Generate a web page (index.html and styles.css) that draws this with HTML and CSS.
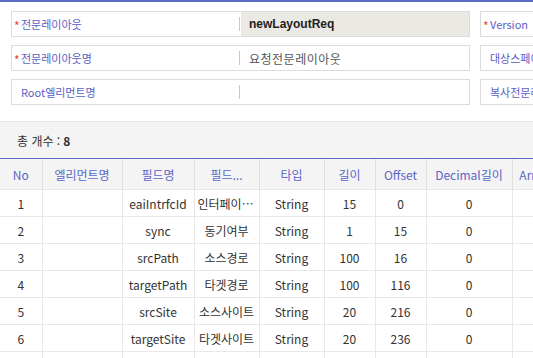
FILE: index.html
```html
<!DOCTYPE html>
<html lang="ko">
<head>
  <meta charset="UTF-8">
  <title>전문레이아웃</title>
  <link rel="stylesheet" href="styles.css">
</head>
<body>

  <div class="form-area">
    <div class="form-grid">
      <div class="field">
        <label class="field-label required">전문레이아웃</label>
        <div class="field-input readonly bold">newLayoutReq</div>
      </div>
      <div class="field">
        <label class="field-label required">Version</label>
        <div class="field-input"></div>
      </div>
      <div class="field">
        <label class="field-label required">전문레이아웃명</label>
        <div class="field-input">요청전문레이아웃</div>
      </div>
      <div class="field">
        <label class="field-label">대상스페이스</label>
        <div class="field-input"></div>
      </div>
      <div class="field">
        <label class="field-label">Root엘리먼트명</label>
        <div class="field-input"></div>
      </div>
      <div class="field">
        <label class="field-label">복사전문레이아웃</label>
        <div class="field-input"></div>
      </div>
    </div>
  </div>

  <div class="count-bar">총 개수 : <b>8</b></div>

  <table class="grid">
    <colgroup>
      <col style="width:42px">
      <col style="width:80px">
      <col style="width:72px">
      <col style="width:65px">
      <col style="width:65px">
      <col style="width:51px">
      <col style="width:51px">
      <col style="width:86px">
      <col style="width:44px">
    </colgroup>
    <thead>
      <tr>
        <th>No</th>
        <th>엘리먼트명</th>
        <th>필드명</th>
        <th>필드...</th>
        <th>타입</th>
        <th>길이</th>
        <th>Offset</th>
        <th>Decimal길이</th>
        <th>Array</th>
      </tr>
    </thead>
    <tbody>
      <tr><td>1</td><td></td><td>eaiIntrfcId</td><td class="clip">인터페이스ID</td><td>String</td><td>15</td><td>0</td><td>0</td><td></td></tr>
      <tr><td>2</td><td></td><td>sync</td><td>동기여부</td><td>String</td><td>1</td><td>15</td><td>0</td><td></td></tr>
      <tr><td>3</td><td></td><td>srcPath</td><td>소스경로</td><td>String</td><td>100</td><td>16</td><td>0</td><td></td></tr>
      <tr><td>4</td><td></td><td>targetPath</td><td>타겟경로</td><td>String</td><td>100</td><td>116</td><td>0</td><td></td></tr>
      <tr><td>5</td><td></td><td>srcSite</td><td>소스사이트</td><td>String</td><td>20</td><td>216</td><td>0</td><td></td></tr>
      <tr><td>6</td><td></td><td>targetSite</td><td>타겟사이트</td><td>String</td><td>20</td><td>236</td><td>0</td><td></td></tr>
      <tr><td>7</td><td></td><td>srcFile</td><td>소스파일</td><td>String</td><td>100</td><td>256</td><td>0</td><td></td></tr>
      <tr><td>8</td><td></td><td>targetFile</td><td>타겟파일</td><td>String</td><td>100</td><td>356</td><td>0</td><td></td></tr>
    </tbody>
  </table>

</body>
</html>
```

FILE: styles.css
```css
body {
  font-family: "Noto Sans CJK KR", "Noto Sans", sans-serif;
  font-size: 12px;
  color: #333;
  margin: 0;
  overflow: hidden;
  background-color: #fff;
}

.form-area {
  border-top: 2px solid #5b6cc8;
  padding: 9px 0 16px 11px;
  border-bottom: 1px solid #e6e6e6;
}

.form-grid {
  display: grid;
  grid-template-columns: 459px 459px;
  column-gap: 10px;
  row-gap: 8px;
}

.field {
  display: flex;
  height: 26px;
  border: 1px solid #dcdcdc;
  box-sizing: border-box;
  background-color: #fff;
}

.field-label {
  width: 228px;
  flex: none;
  display: flex;
  align-items: center;
  padding-left: 9px;
  box-sizing: border-box;
  color: #5a5ec4;
  font-size: 11px;
  position: relative;
}

.field-label::after {
  content: "";
  position: absolute;
  right: 0;
  top: 5px;
  height: 14px;
  width: 1px;
  background-color: #c8c8c8;
}

.required::before {
  content: "*";
  color: #e8452c;
  position: absolute;
  left: 2px;
  top: 5px;
  font-size: 12px;
}

.field-input {
  flex: 1;
  display: flex;
  align-items: center;
  padding-left: 9px;
  color: #555;
  letter-spacing: 0.5px;
}

.field-input.readonly {
  background-color: #ebe9e3;
  margin-left: 1px;
  padding-left: 8px;
}

.field-input.bold {
  font-family: "Liberation Sans", Arial, sans-serif;
  color: #222;
  font-weight: bold;
  letter-spacing: 0;
}

.count-bar {
  background-color: #f4f4f4;
  height: 36px;
  padding-left: 17px;
  display: flex;
  align-items: center;
  border-bottom: 1px solid #5b6cc8;
  color: #333;
}

.count-bar b {
  margin-left: 3px;
}

.grid {
  border-collapse: collapse;
  table-layout: fixed;
  width: 556px;
}

.grid th {
  height: 30px;
  padding: 0 4px;
  background-color: #f4f4f4;
  color: #5a66c8;
  font-weight: normal;
  border-right: 1px solid #dedede;
  border-bottom: 1px solid #e6e6e6;
  white-space: nowrap;
  overflow: hidden;
}

.grid td {
  height: 26px;
  padding: 0 3px;
  text-align: center;
  border-right: 1px solid #e8e8e8;
  border-bottom: 1px solid #e8e8e8;
  white-space: nowrap;
  overflow: hidden;
}

.grid td.clip {
  text-overflow: ellipsis;
}
```
